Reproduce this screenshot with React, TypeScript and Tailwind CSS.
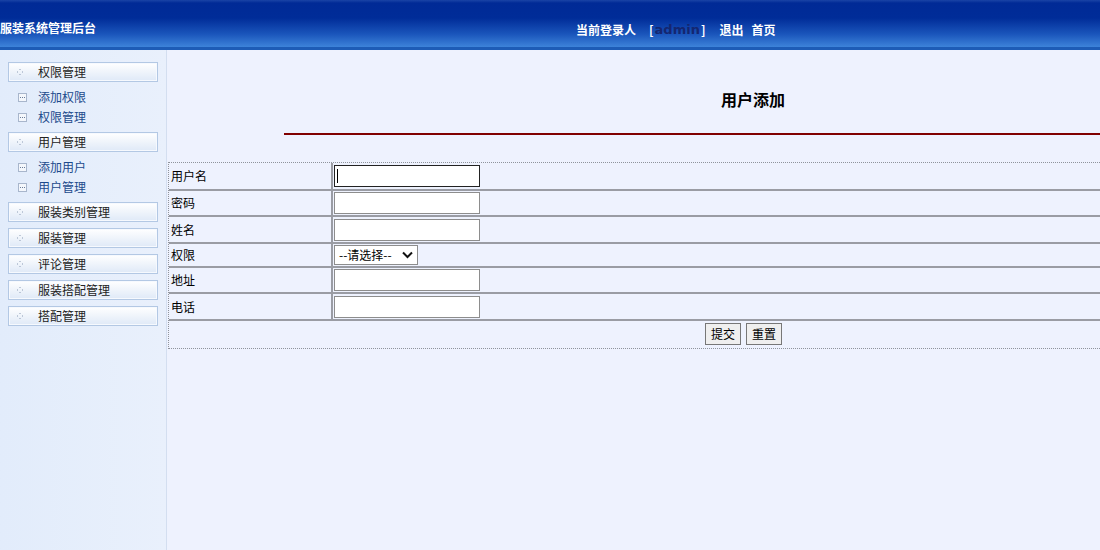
import React from "react";

// Sidebar menu groups
const menus: { title: string; items: string[] }[] = [
  { title: "权限管理", items: ["添加权限", "权限管理"] },
  { title: "用户管理", items: ["添加用户", "用户管理"] },
  { title: "服装类别管理", items: [] },
  { title: "服装管理", items: [] },
  { title: "评论管理", items: [] },
  { title: "服装搭配管理", items: [] },
  { title: "搭配管理", items: [] },
];

const font = "font-['SimSun','Noto_Sans_CJK_SC',sans-serif]";

const DotIcon = () => (
  <svg width="6" height="6" viewBox="0 0 6 6" className="shrink-0">
    <rect x="2.5" y="0" width="1" height="1" fill="#8a9bb5" />
    <rect x="0" y="2.5" width="1" height="1" fill="#8a9bb5" />
    <rect x="5" y="2.5" width="1" height="1" fill="#8a9bb5" />
    <rect x="2.5" y="5" width="1" height="1" fill="#8a9bb5" />
  </svg>
);

const BoxIcon = () => (
  <svg width="9" height="9" viewBox="0 0 9 9" className="shrink-0">
    <rect x="0.5" y="0.5" width="8" height="8" fill="#f4f7fc" stroke="#a8b6cc" />
    <rect x="2" y="4" width="1" height="1" fill="#6b7d99" />
    <rect x="4" y="4" width="1" height="1" fill="#6b7d99" />
    <rect x="6" y="4" width="1" height="1" fill="#6b7d99" />
  </svg>
);

const Sidebar = () => (
  <aside className="w-[167px] shrink-0 border-r border-[#d3def0] bg-gradient-to-r from-[#e2ecfb] to-[#e9f0fc] pt-3">
    {menus.map((m) => (
      <div key={m.title} className={m.items.length > 0 ? "mb-[5px]" : "mb-[6px]"}>
        <div className="ml-2 flex h-5 w-[150px] items-center border border-[#b3c8e4] bg-gradient-to-b from-white to-[#dfe9f7] shadow-[inset_0_0_0_1px_#f6f9fe]">
          <div className="ml-2 w-[21px]">
            <DotIcon />
          </div>
          <span className="text-[12px] text-[#222]">{m.title}</span>
        </div>
        {m.items.length > 0 && (
          <div className="mt-[5px] flex flex-col">
            {m.items.map((it) => (
              <div key={it} className="flex h-5 items-center">
                <div className="ml-[18px] w-5">
                  <BoxIcon />
                </div>
                <span className="text-[12px] text-[#1c4a8c]">{it}</span>
              </div>
            ))}
          </div>
        )}
      </div>
    ))}
  </aside>
);

const fields: { label: string; type: "input" | "select"; h: string; focus?: boolean }[] = [
  { label: "用户名", type: "input", h: "h-[28px]", focus: true },
  { label: "密码", type: "input", h: "h-[26px]" },
  { label: "姓名", type: "input", h: "h-[27px]" },
  { label: "权限", type: "select", h: "h-[24px]" },
  { label: "地址", type: "input", h: "h-[26px]" },
  { label: "电话", type: "input", h: "h-[27px]" },
];

const FormTable = () => (
  <div className="ml-px mt-[27px] w-[1150px] border-y border-l border-dotted border-[#8f949c]">
    {fields.map((f) => (
      <div key={f.label} className={`grid grid-cols-[162px_1fr] border-b-2 border-[#9a9ca4] ${f.h}`}>
        <div className="flex items-center pl-[2px] text-[12px] text-black">{f.label}</div>
        <div className="flex items-center border-l-2 border-[#9a9ca4] pl-[1px]">
          {f.type === "input" ? (
            <div
              className={`relative h-[22px] w-[146px] bg-white ${f.focus ? "border border-[#222]" : "border border-[#8d8d8d]"}`}
            >
              {f.focus && <span className="absolute left-[2px] top-[3px] h-[14px] w-px bg-black" />}
            </div>
          ) : (
            <div className="flex h-[20px] w-[84px] items-center justify-between border border-[#8d8d8d] bg-white pl-[4px] pr-[4px] text-[12px] text-black">
              <span>--请选择--</span>
              <svg width="11" height="8" viewBox="0 0 11 8">
                <path d="M1 1.5 L5.5 6 L10 1.5" fill="none" stroke="#111" strokeWidth="2" />
              </svg>
            </div>
          )}
        </div>
      </div>
    ))}
    <div className="flex h-[27px] items-center justify-center gap-[5px] pb-[1px]">
      <button className="h-[22px] border border-[#777] bg-[#efefef] px-[5px] text-[12px] text-black">提交</button>
      <button className="h-[22px] border border-[#777] bg-[#efefef] px-[5px] text-[12px] text-black">重置</button>
    </div>
  </div>
);

export default function App() {
  return (
    <div className={`h-[550px] w-[1100px] overflow-hidden bg-[#eef2fe] ${font}`}>
      {/* Top banner */}
      <header className="relative flex h-[50px] items-center border-b-[3px] border-[#1d5cb6] bg-[linear-gradient(to_bottom,#1a44a6_0px,#002a96_3px,#002c98_18px,#1a55bb_34px,#3d83d9_47px)] text-[12px] font-bold text-white">
        <span className="pt-[9px]">服装系统管理后台</span>
        <div className="absolute left-[576px] top-[20px] flex items-center">
          <span>当前登录人</span>
          <span className="ml-[13px]">[</span>
          <span className="ml-[1px] font-['DejaVu_Sans',sans-serif] text-[13px] text-[#142670]">admin</span>
          <span className="ml-[1px]">]</span>
          <span className="ml-[14px]">退出</span>
          <span className="ml-[8px]">首页</span>
        </div>
      </header>

      <div className="flex h-[500px]">
        <Sidebar />
        <main className="w-[1172px] shrink-0">
          <h2 className="mt-[39px] text-center text-[16px] font-bold leading-5 text-black">用户添加</h2>
          <div className="mx-auto mt-[24px] h-[2px] w-[80%] bg-[#800000]" />
          <FormTable />
        </main>
      </div>
    </div>
  );
}
